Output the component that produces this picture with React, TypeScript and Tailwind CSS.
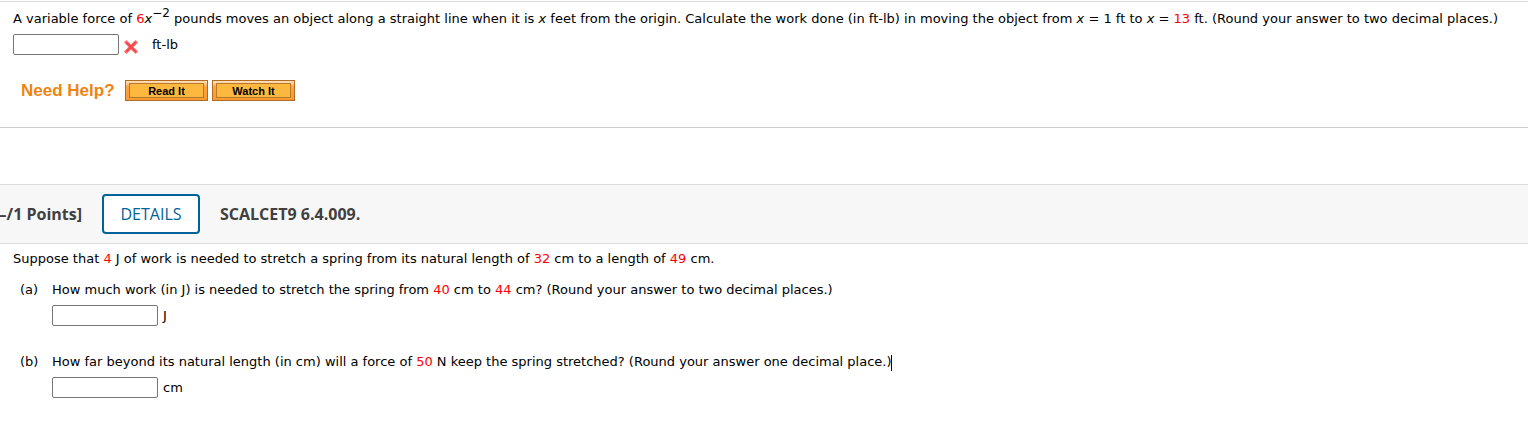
import type { ReactNode } from "react";

function Num({ children }: { children: ReactNode }) {
  return <span className="text-[#ff0000]">{children}</span>;
}

function Answer({ id, label }: { id: string; label: string }) {
  return (
    <input
      id={id}
      type="text"
      aria-label={label}
      className="h-[21px] w-[106px] shrink-0 rounded-[2px] border border-[#767676] bg-white px-1"
    />
  );
}

function HelpButton({ children }: { children: ReactNode }) {
  return (
    <button
      type="button"
      className="h-[21px] w-[83px] border border-[#b06d22] bg-linear-to-b from-[#ffdcb4] from-5% via-[#fda341] via-30% to-[#fb9a33] px-[3px] py-[2px] font-['Liberation_Sans',Arial,sans-serif] text-[11px] font-bold text-black"
    >
      <span className="flex h-[15px] items-center justify-center border border-[#b5792c] bg-[#fdb840]">
        {children}
      </span>
    </button>
  );
}

function WrongMark() {
  return (
    <svg width="14" height="14" viewBox="0 0 14 14" role="img" aria-label="Incorrect">
      <path
        d="M2.4 2.4 L11.6 11.6 M11.6 2.4 L2.4 11.6"
        stroke="#ff7d7f"
        strokeWidth="3.6"
        strokeLinecap="square"
        strokeLinejoin="round"
      />
      <path
        d="M3 3 L11.4 11.4 M11.2 2.8 L2.8 11.2"
        stroke="#f34b50"
        strokeWidth="2.4"
        strokeLinecap="round"
      />
    </svg>
  );
}

function Part({ id, letter, unit, children }: { id: string; letter: string; unit: string; children: ReactNode }) {
  return (
    <li className="flex pl-5">
      <span className="w-8 shrink-0 leading-5">({letter})</span>
      <div>
        <p className="leading-5">{children}</p>
        <div className="mt-[5px] flex items-center gap-[5px]">
          <Answer id={id} label={`Answer for part ${letter}`} />
          <label htmlFor={id}>{unit}</label>
        </div>
      </div>
    </li>
  );
}

export default function App() {
  return (
    <main className="overflow-x-hidden bg-white font-['DejaVu_Sans',Verdana,sans-serif] text-[13px] leading-5 text-black">
      <section className="mt-px border-y border-t-[#dddddd] border-b-[#cccccc] pb-[26px] pl-[13px]">
        <p className="pt-[7px] whitespace-nowrap">
          A variable force of <Num>6</Num>
          <i>x</i>
          <sup className="text-[12px] leading-none">−2</sup> pounds moves an object along a straight line when it is{" "}
          <i>x</i> feet from the origin. Calculate the work done (in ft-lb) in moving the object from <i>x</i> = 1 ft to{" "}
          <i>x</i> = <Num>13</Num> ft. (Round your answer to two decimal places.)
        </p>
        <div className="mt-[5px] flex items-center">
          <Answer id="work" label="Work done" />
          <span className="mt-1 ml-[5px]">
            <WrongMark />
          </span>
          <label htmlFor="work" className="ml-[14px]">
            ft-lb
          </label>
        </div>
        <div className="mt-[25px] flex items-center pl-2">
          <h2 className="w-[104px] font-['Liberation_Sans',Arial,sans-serif] text-[17px] leading-5 font-bold text-[#ee8512]">
            Need Help?
          </h2>
          <div className="flex gap-1">
            <HelpButton>Read It</HelpButton>
            <HelpButton>Watch It</HelpButton>
          </div>
        </div>
      </section>

      <header className="mt-14 flex h-[60px] items-center border-y border-[#dddddd] bg-[#f7f7f7] font-['Open_Sans',sans-serif] text-[16px] font-bold text-[#404040]">
        <span className="flex w-[82px] shrink-0 justify-end whitespace-nowrap">–/1 Points]</span>
        <button
          type="button"
          className="mx-5 h-10 w-[98px] shrink-0 rounded-[4px] border-2 border-[#006298] bg-white font-medium text-[#006298]"
        >
          DETAILS
        </button>
        <h2>SCALCET9 6.4.009.</h2>
      </header>

      <section className="pt-[5px]">
        <p className="pl-[13px]">
          Suppose that <Num>4</Num> J of work is needed to stretch a spring from its natural length of <Num>32</Num> cm
          to a length of <Num>49</Num> cm.
        </p>
        <ol className="mt-[11px] flex flex-col gap-[26px]">
          <Part id="part-a" letter="a" unit="J">
            How much work (in J) is needed to stretch the spring from <Num>40</Num> cm to <Num>44</Num> cm? (Round your
            answer to two decimal places.)
          </Part>
          <Part id="part-b" letter="b" unit="cm">
            How far beyond its natural length (in cm) will a force of <Num>50</Num> N keep the spring stretched? (Round
            your answer one decimal place.)
            <span className="-ml-px inline-block h-4 w-px bg-black align-middle" />
          </Part>
        </ol>
      </section>
    </main>
  );
}
